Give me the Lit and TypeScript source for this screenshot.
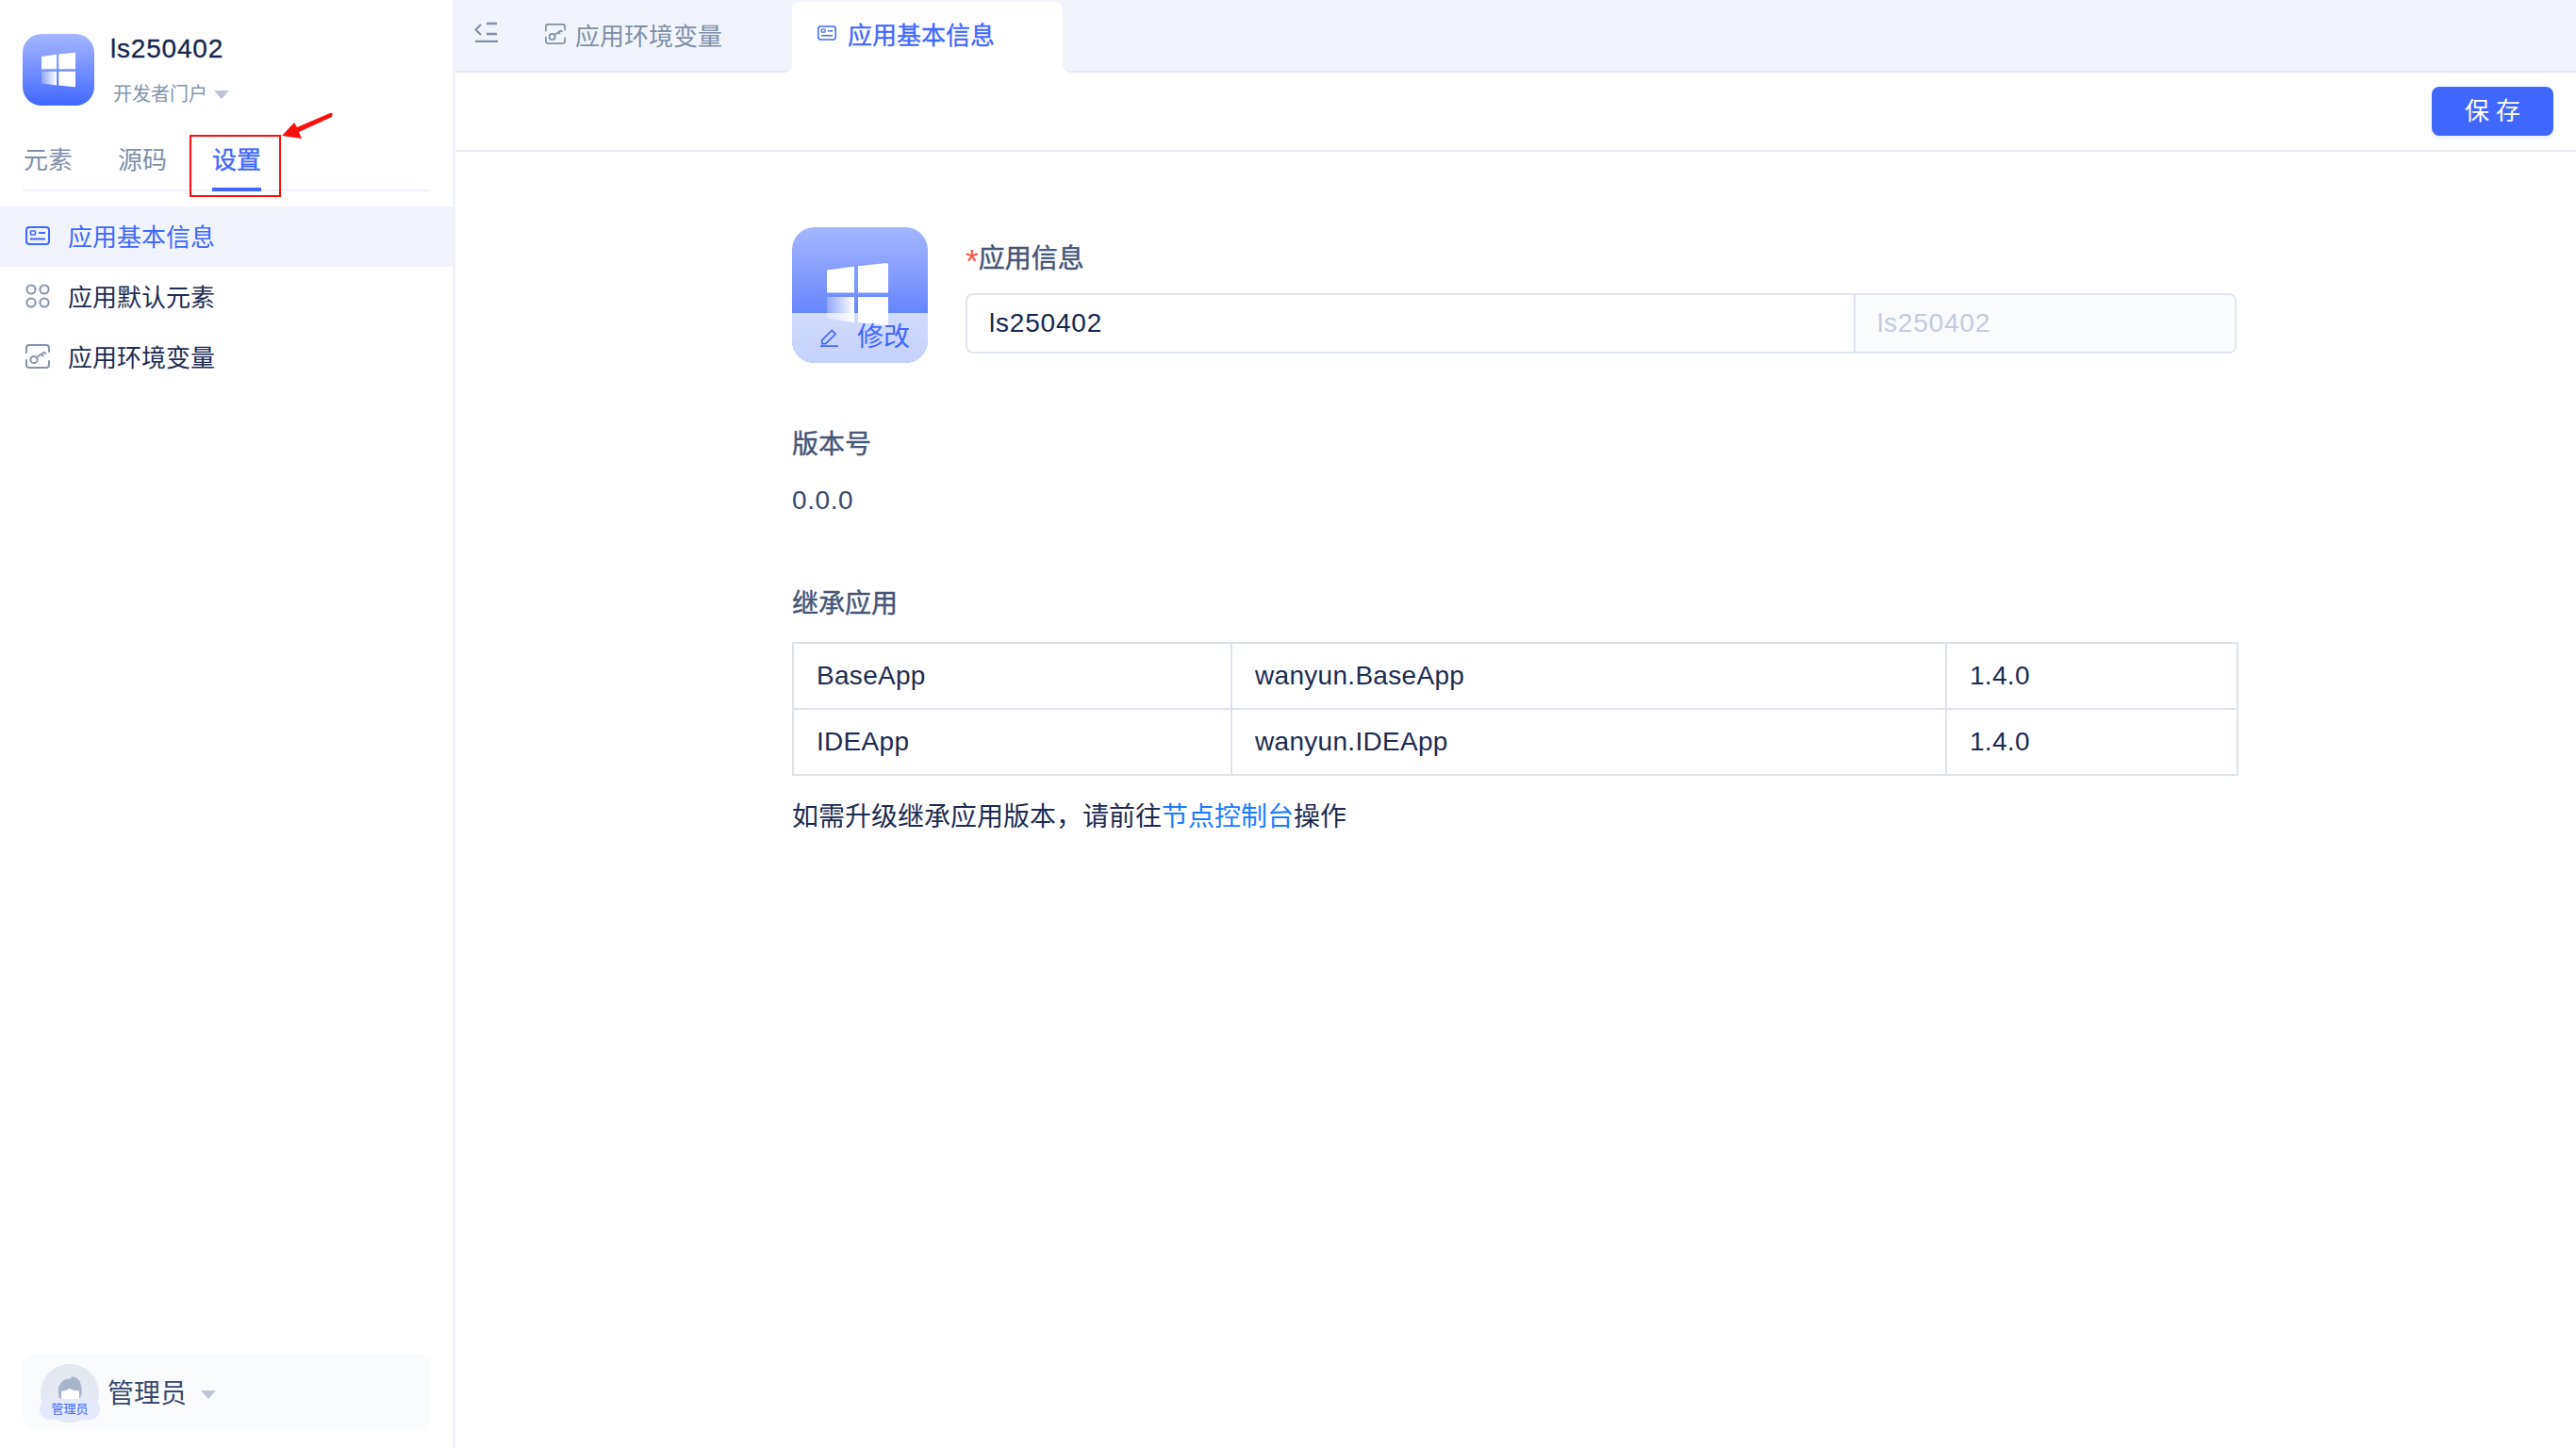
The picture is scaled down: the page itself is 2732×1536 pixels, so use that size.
import { LitElement, html, css, svg } from "lit";
import { customElement } from "lit/decorators.js";

const winLogo = (id: string) => svg`
  <defs>
    <linearGradient id="${id}" x1="0" x2="1" y1="0" y2="0">
      <stop offset="0" stop-color="#fff" stop-opacity=".25"/>
      <stop offset="1" stop-color="#fff"/>
    </linearGradient>
  </defs>
  <path d="M0 7.5 L28 3.8 Q29 3.7 29 4.8 V31.5 H1 Q0 31.5 0 30.5 Z" fill="#fff"/>
  <path d="M33 3.2 L63 0 Q65 0 65 1.5 V31.5 H33 Z" fill="#fff"/>
  <path d="M0 36 H29 V63 L1 59 Q0 59 0 58 Z" fill="url(#${id})"/>
  <path d="M33 36 H65 V65 Q65 66 63 66 L33 63 Z" fill="#fff"/>`;

const cardIcon = svg`<rect x="1" y="1" width="24" height="18" rx="3" fill="none" stroke="currentColor" stroke-width="2"/>
  <rect x="5.5" y="5" width="5" height="4" rx=".8" fill="none" stroke="currentColor" stroke-width="1.6"/>
  <path d="M14 7h7M5 13.5h16" stroke="currentColor" stroke-width="2" fill="none"/>`;

const keyIcon = svg`<path d="M1 9V4Q1 1 4 1H22Q25 1 25 4V8M1 17v5q0 3 3 3h18q3 0 3-3v-4" fill="none" stroke="currentColor" stroke-width="2" stroke-linecap="round"/>
  <circle cx="9" cy="16.5" r="3.6" fill="none" stroke="currentColor" stroke-width="2"/>
  <path d="M12 14L20 8.5M17 10.5l1.8 2.6M20 8.5l1.6 2.3" fill="none" stroke="currentColor" stroke-width="2"/>`;

@customElement("app-root")
export class AppRoot extends LitElement {
  static styles = css`
    :host {
      display: flex;
      height: 100vh;
      overflow: hidden;
      background: #fff;
      font-family: "Liberation Sans", "Noto Sans CJK SC", sans-serif;
      color: #1c2b52;
    }
    .side {
      width: 480px;
      flex: none;
      box-sizing: content-box;
      border-right: 3px solid #eff2f8;
      display: flex;
      flex-direction: column;
      position: relative;
    }
    .head {
      display: flex;
      gap: 17px;
      padding: 36px 24px 0;
      height: 95px;
    }
    .logo {
      width: 76px;
      height: 76px;
      border-radius: 20px;
      background: linear-gradient(#a5b7ff, #4068ff);
      display: flex;
      align-items: center;
      justify-content: center;
      flex: none;
    }
    .logo svg { width: 36px; height: 38px; }
    .name {
      font-size: 28px;
      line-height: 32px;
      letter-spacing: .8px;
      color: #14264f;
      -webkit-text-stroke: .3px currentColor;
    }
    .sub {
      display: flex;
      align-items: center;
      gap: 7px;
      margin: 18px 0 0 3px;
      font-size: 20px;
      line-height: 28px;
      color: #8494ad;
    }
    .caret {
      width: 0;
      height: 0;
      border-left: 8px solid transparent;
      border-right: 8px solid transparent;
      border-top: 9px solid #bcc5d8;
    }
    .tabs {
      display: flex;
      gap: 48px;
      margin: 20px 24px 0;
      height: 52px;
      box-sizing: border-box;
      border-bottom: 2px solid #eff2f8;
      padding-left: 1px;
      font-size: 26px;
      line-height: 38px;
      color: #7f8fa9;
    }
    .tabs > span { height: 52px; box-sizing: border-box; }
    .tabs .on {
      color: #4068ff;
      -webkit-text-stroke: .35px currentColor;
      border-bottom: 4px solid #4068ff;
      position: relative;
    }
    .mark {
      position: absolute;
      left: -24px;
      top: -8px;
      width: 97px;
      height: 66px;
      box-sizing: border-box;
      border: 2px solid #fa0f0f;
    }
    .arrow {
      position: absolute;
      left: 290px;
      top: 115px;
      width: 70px;
      height: 40px;
      overflow: visible;
    }
    .menu { margin-top: 16px; display: flex; flex-direction: column; }
    .mi {
      height: 64px;
      box-sizing: border-box;
      padding-bottom: 4px;
      display: flex;
      align-items: center;
      gap: 19px;
      padding-left: 27px;
      font-size: 26px;
      color: #1e2c52;
    }
    .mi svg { width: 26px; height: 26px; color: #8695ae; flex: none; margin-top: 2px; }
    .mi.on { background: #f1f4fd; color: #4068ff; }
    .mi.on svg { color: #4068ff; height: 20px; }
    .user {
      margin: auto 24px 20px;
      height: 80px;
      border-radius: 12px;
      background: #fafbfd;
      display: flex;
      align-items: center;
      padding-left: 19px;
      color: #39496d;
      font-size: 28px;
    }
    .avatar {
      width: 62px;
      height: 62px;
      flex: none;
      border-radius: 50%;
      background: #e3e8f1;
      position: relative;
      margin: 4px 9px 0 0;
      overflow: visible;
    }
    .avatar svg { position: absolute; left: 0; top: 0; width: 62px; height: 62px; }
    .badge {
      position: absolute;
      left: -1px;
      top: 37px;
      width: 64px;
      height: 22px;
      border-radius: 11px;
      background: #e4e9fe;
      color: #4068ff;
      font-size: 13px;
      line-height: 22px;
      text-align: center;
    }
    .user .caret { margin: 6px 0 0 15px; }

    .main { flex: 1; min-width: 0; display: flex; flex-direction: column; }
    .bar {
      height: 77px;
      box-sizing: border-box;
      flex: none;
      background: #f1f4fd;
      border-bottom: 2px solid #e4e8f3;
      display: flex;
      align-items: flex-start;
      font-size: 26px;
    }
    .toggle { width: 25px; height: 22px; margin: 23px 0 0 20px; flex: none; color: #7f8fa9; }
    .tab {
      display: flex;
      align-items: center;
      height: 72px;
      color: #7f8fa9;
    }
    .tab.idle { margin-left: 50px; width: 262px; gap: 10px; }
    .tab.idle svg { width: 22px; height: 22px; }
    .tab.active {
      position: relative;
      width: 287px;
      box-sizing: border-box;
      height: 75px;
      margin-top: 2px;
      padding: 0 0 9px 27px;
      gap: 12px;
      background: #fff;
      border-radius: 8px 8px 0 0;
      color: #4068ff;
      -webkit-text-stroke: .35px currentColor;
    }
    .tab.active::before,
    .tab.active::after {
      content: "";
      position: absolute;
      bottom: 0;
      width: 8px;
      height: 8px;
    }
    .tab.active::before { left: -8px; background: radial-gradient(circle at 0 0, transparent 7.5px, #fff 8px); }
    .tab.active::after { right: -8px; background: radial-gradient(circle at 100% 0, transparent 7.5px, #fff 8px); }
    .tab.active svg { width: 20px; height: 16px; }
    .tools {
      height: 84px;
      box-sizing: border-box;
      flex: none;
      border-bottom: 2px solid #e4e8f3;
      display: flex;
      justify-content: flex-end;
      align-items: flex-start;
      padding: 15px 24px 0 0;
    }
    .save {
      width: 129px;
      height: 52px;
      border-radius: 8px;
      background: #4068ff;
      color: #fff;
      font-size: 26px;
      line-height: 52px;
      text-align: center;
      box-shadow: 0 4px 4px #eff3ff;
      white-space: pre;
    }
    .content {
      width: 1534px;
      margin-left: 357px;
      display: flex;
      flex-direction: column;
      padding-top: 80px;
    }
    .inforow { display: flex; gap: 40px; }
    .appicon {
      width: 144px;
      height: 144px;
      border-radius: 24px;
      background: linear-gradient(#a5b7ff, #5f81ff 70%, #4068ff);
      position: relative;
      overflow: hidden;
      flex: none;
    }
    .appicon > svg { position: absolute; left: 37px; top: 38px; width: 65px; height: 66px; }
    .edit {
      position: absolute;
      left: 0; right: 0; bottom: 0;
      height: 53px;
      background: rgba(255,255,255,.7);
      display: flex;
      align-items: center;
      padding-left: 29px;
      gap: 18px;
      font-size: 28px;
      color: #4068ff;
    }
    .edit svg { width: 22px; height: 22px; flex: none; margin-bottom: 3px; }
    .edit span { margin-bottom: 7px; }
    .fields { flex: 1; display: flex; flex-direction: column; }
    .label {
      font-size: 28px;
      line-height: 40px;
      color: #465676;
      -webkit-text-stroke: .45px currentColor;
    }
    .fields .label { margin-top: 14px; }
    .star {
      color: #f4574f;
      font-size: 35px;
      line-height: 0;
      vertical-align: -5px;
      -webkit-text-stroke: 0;
    }
    .input {
      margin-top: 16px;
      height: 64px;
      width: 1348px;
      box-sizing: border-box;
      border: 2px solid #e0e4ee;
      border-radius: 8px;
      display: flex;
      font-size: 28px;
      letter-spacing: .8px;
      line-height: 60px;
      overflow: hidden;
    }
    .input .a { width: 942px; box-sizing: border-box; padding-left: 23px; color: #14264f; border-right: 2px solid #e0e4ee; }
    .input .b { flex: 1; padding-left: 23px; background: #fafbfd; color: #c3cbe0; }
    .version { margin-top: 67px; }
    .val { margin-top: 19px; font-size: 28px; line-height: 40px; color: #39496d; letter-spacing: .6px; }
    .inherit { margin-top: 70px; }
    .tbl {
      margin-top: 20px;
      border: 2px solid #dfe2ec;
      border-bottom: none;
      font-size: 28px;
    }
    .tr {
      display: grid;
      grid-template-columns: 465px 758px 1fr;
      height: 70px;
      border-bottom: 2px solid #dfe2ec;
      box-sizing: border-box;
      line-height: 68px;
      letter-spacing: .3px;
      color: #1c2b52;
    }
    .tr span { padding-left: 24px; border-right: 2px solid #dfe2ec; }
    .tr span:last-child { border-right: none; }
    .note { margin-top: 24px; font-size: 28px; line-height: 40px; color: #1c2b52; }
    .note a { color: #1a7cff; text-decoration: none; }
  `;

  render() {
    return html`
      <aside class="side">
        <div class="head">
          <div class="logo"><svg viewBox="0 0 65 66">${winLogo("g1")}</svg></div>
          <div>
            <div class="name">ls250402</div>
            <div class="sub">开发者门户<i class="caret"></i></div>
          </div>
        </div>
        <div class="tabs">
          <span>元素</span><span>源码</span>
          <span class="on">设置<i class="mark"></i></span>
        </div>
        <svg class="arrow" viewBox="0 0 70 40">
          <path d="M9 29 L22 15 L25 20 L60 5 Q64 4 62 9 L27 25 L30 32 Z" fill="#fa0f0f"/>
        </svg>
        <nav class="menu">
          <div class="mi on"><svg viewBox="0 0 26 20">${cardIcon}</svg>应用基本信息</div>
          <div class="mi"><svg viewBox="0 0 26 26" fill="none" stroke="currentColor" stroke-width="2">
            <circle cx="6" cy="6" r="4.6"/><circle cx="20" cy="6" r="4.6"/>
            <circle cx="6" cy="20" r="4.6"/><circle cx="20" cy="20" r="4.6"/></svg>应用默认元素</div>
          <div class="mi"><svg viewBox="0 0 26 26">${keyIcon}</svg>应用环境变量</div>
        </nav>
        <div class="user">
          <div class="avatar">
            <svg viewBox="0 0 62 62">
              <path d="M20 36 Q17 26 21 21 Q25 15 31 16 L34 13 Q42 15 43 23 Q45 30 42 36 L40 38 H22 Z" fill="#a7b4ca"/>
              <path d="M22 40 V29 Q28 28 31 26 Q36 29 41 28 V40 Z" fill="#fff"/>
            </svg>
            <div class="badge">管理员</div>
          </div>
          管理员<i class="caret"></i>
        </div>
      </aside>
      <section class="main">
        <div class="bar">
          <svg class="toggle" viewBox="0 0 25 22" fill="none" stroke="currentColor" stroke-width="2.4">
            <path d="M7 3 L1.5 8.5 L7 14" stroke-width="2"/><path d="M13 2h11M13 13h11M1 21h24"/>
          </svg>
          <div class="tab idle"><svg viewBox="0 0 26 26">${keyIcon}</svg>应用环境变量</div>
          <div class="tab active"><svg viewBox="0 0 26 20">${cardIcon}</svg>应用基本信息</div>
        </div>
        <div class="tools"><div class="save">保 存</div></div>
        <div class="content">
          <div class="inforow">
            <div class="appicon">
              <svg viewBox="0 0 65 66">${winLogo("g2")}</svg>
              <div class="edit">
                <svg viewBox="0 0 20 20" fill="none" stroke="currentColor" stroke-width="1.6">
                  <path d="M2.5 13.5 L12 4 L15.5 7.5 L6 17 H2.5 Z M1 19.2 H18"/>
                </svg>
                <span>修改</span>
              </div>
            </div>
            <div class="fields">
              <div class="label"><span class="star">*</span>应用信息</div>
              <div class="input"><div class="a">ls250402</div><div class="b">ls250402</div></div>
            </div>
          </div>
          <div class="label version">版本号</div>
          <div class="val">0.0.0</div>
          <div class="label inherit">继承应用</div>
          <div class="tbl">
            <div class="tr"><span>BaseApp</span><span>wanyun.BaseApp</span><span>1.4.0</span></div>
            <div class="tr"><span>IDEApp</span><span>wanyun.IDEApp</span><span>1.4.0</span></div>
          </div>
          <div class="note">如需升级继承应用版本，请前往<a>节点控制台</a>操作</div>
        </div>
      </section>
    `;
  }
}
